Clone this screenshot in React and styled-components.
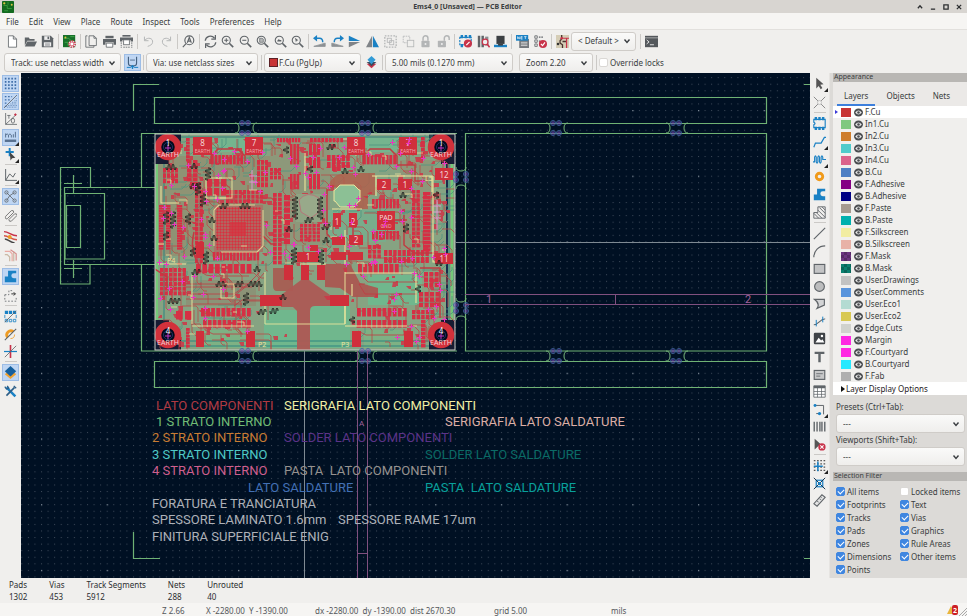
import React from 'react'
import styled, { createGlobalStyle, css } from 'styled-components'

const GlobalStyle = createGlobalStyle`
*{
box-sizing:border-box;
}
body{
margin:0;
font-family:"Noto Sans","Open Sans",sans-serif;
font-size:8px;
line-height:12px;
color:#3a3d40;
background-color:#f0efed;
}
button,input,select{
font:inherit;
color:inherit;
margin:0;
padding:0;
}
`

const K = '#5f6468'
const B = '#1a81c4'
const R = '#c8334a'
const G = '#b3b5b6'

const Window = styled.div`
height:100vh;
display:flex;
flex-direction:column;
overflow:hidden;
`

const TitleBar = styled.header`
height:13px;
flex:none;
display:flex;
align-items:center;
padding:0 2px;
background-color:#d8d5d1;
`

const Title = styled.h1`
flex:1;
margin:0;
padding-left:8px;
font-size:7px;
line-height:12px;
font-weight:700;
text-align:center;
`

const WindowButton = styled.button`
width:13px;
height:12px;
border:0;
background:none;
display:flex;
align-items:center;
justify-content:center;
`

const MenuBar = styled.nav`
height:17px;
flex:none;
display:flex;
align-items:center;
gap:10px;
padding:2px 6px 0;
background-color:#f6f5f3;
border-bottom:1px solid #e2e0dd;
`

const MenuLink = styled.a`
color:inherit;
text-decoration:none;
`

const Toolbar = styled.div`
height:${p => p.$height}px;
flex:none;
display:flex;
align-items:center;
padding-left:4px;
background-color:#f0efed;
`

const Column = styled.div`
width:${p => p.$width}px;
flex:none;
display:flex;
flex-direction:column;
align-items:center;
padding-top:2px;
background-color:#f0efed;
`

const Group = styled.div`
display:flex;
flex:none;
justify-content:space-between;
${p => p.$column
    ? css`flex-direction:column;height:${p.$size}px;`
    : css`width:${p.$size}px;`}
`

const Divider = styled.span`
flex:none;
background-color:#cbc9c6;
${p => p.$column
    ? css`width:12px;height:1px;margin:1px 0 2px;`
    : css`width:1px;height:15px;margin:0 2px;`}
`

const ToolButton = styled.button`
width:17px;
height:17px;
flex:none;
position:relative;
display:flex;
align-items:center;
justify-content:center;
border:1px solid ${p => (p.$active ? '#9dbde6' : 'transparent')};
background-color:${p => (p.$active ? '#bfd6f3' : 'transparent')};
&:hover{
  background-color:#d5e3f5;
}
${p => p.$more && css`
&::after{
  content:"";
  position:absolute;
  right:-1px;
  bottom:-1px;
  border:2px solid transparent;
  border-right-color:#222;
  border-bottom-color:#222;
}
`}
`

const SelectBox = styled.div`
position:relative;
flex:none;
height:19px;
width:${p => (p.$width ? p.$width + 'px' : 'auto')};
margin-right:${p => p.$after || 0}px;
display:flex;
align-items:center;
background:linear-gradient(#fafaf9,#efeeec);
border:1px solid #cfccc8;
border-radius:3px;
`

const SelectInput = styled.select`
appearance:none;
flex:1;
min-width:0;
height:100%;
border:0;
background:none;
padding-left:${p => (p.$tight ? 1 : 6)}px;
outline:none;
`

const Arrow = styled.svg`
position:absolute;
right:4px;
top:50%;
margin-top:-4px;
pointer-events:none;
`

const Swatch = styled.span`
width:10px;
height:9px;
flex:none;
background-color:${p => p.$color};
${p => p.$checker && css`
background-image:conic-gradient(rgba(0,0,0,0.2) 25%,transparent 0 50%,rgba(0,0,0,0.2) 0 75%,transparent 0);
background-size:6px 6px;
`}
`

const LayerSwatch = styled.span`
width:9px;
height:9px;
flex:none;
margin-left:4px;
background-color:#c83434;
border:1px solid #5c2226;
`

const CheckLabel = styled.label`
display:flex;
align-items:center;
gap:2px;
height:13px;
white-space:nowrap;
`

const CheckInput = styled.input`
appearance:none;
width:9px;
height:9px;
flex:none;
position:relative;
background-color:#fff;
border:1px solid #dad8d5;
border-radius:2px;
&:checked{
  background-color:#3f86e0;
  border-color:#3f86e0;
}
&:checked::after{
  content:"";
  position:absolute;
  left:2px;
  top:0;
  width:3px;
  height:5px;
  border:solid #fff;
  border-width:0 1px 1px 0;
  transform:rotate(45deg);
}
`

const Main = styled.main`
flex:1;
min-height:0;
display:flex;
`

const Canvas = styled.div`
flex:1;
min-width:0;
background-color:#001023;
`

const Drawing = styled.svg`
display:block;
width:100%;
height:100%;
`

const Panel = styled.aside`
width:138px;
flex:none;
padding-left:3px;
display:flex;
flex-direction:column;
background-color:#dcdad7;
border-left:1px solid #e6e4e1;
`

const PanelTitle = styled.h2`
flex:none;
height:9px;
margin:0;
padding-left:1px;
font-size:7px;
line-height:8px;
font-weight:400;
background-color:#b9b7b4;
`

const Tabs = styled.div`
flex:none;
height:24px;
display:flex;
align-items:flex-end;
padding:0 4px;
background-color:#ebe9e7;
`

const Tab = styled.button`
height:18px;
padding:0 ${p => p.$pad}px;
border:0;
border-bottom:2px solid ${p => (p.$active ? '#3d7fdc' : 'transparent')};
background:none;
`

const LayerList = styled.ul`
flex:none;
margin:0;
padding:0;
list-style:none;
background-color:#f0efed;
`

const LayerRow = styled.li`
height:12px;
display:flex;
align-items:center;
padding-left:2px;
background-color:${p => (p.$active ? '#fff' : 'transparent')};
`

const Marker = styled.span`
width:6px;
border-left:3px solid ${p => (p.$active ? '#3a39d8' : 'transparent')};
border-top:2px solid transparent;
border-bottom:2px solid transparent;
`

const EyeButton = styled.button`
width:14px;
height:12px;
border:0;
background:none;
display:flex;
align-items:center;
justify-content:center;
`

const Options = styled.button`
flex:none;
height:13px;
padding-left:8px;
border:0;
text-align:left;
background-color:#fff;
color:#1f2123;
display:flex;
align-items:center;
gap:1px;
`

const Caret = styled.span`
border-left:4px solid #111;
border-top:3px solid transparent;
border-bottom:3px solid transparent;
`

const Presets = styled.div`
flex:none;
display:flex;
flex-direction:column;
padding:5px 2px 6px 3px;
`

const FieldLabel = styled.label`
height:14px;
line-height:14px;
`

const Filters = styled.div`
display:grid;
grid-template-columns:64px 1fr;
padding:4px 0 0 3px;
`

const MessagePanel = styled.dl`
flex:none;
height:25px;
margin:0;
padding-left:9px;
display:flex;
gap:22px;
color:#2b2d2f;
background-color:#f0efed;
`

const Message = styled.div`
padding-top:1px;
dt,dd{
  margin:0;
  line-height:12px;
}
`

const StatusBar = styled.footer`
flex:none;
height:13px;
display:flex;
align-items:center;
padding-left:162px;
background-color:#f6f5f3;
color:#55585b;
`

const Status = styled.span`
width:${p => p.$width}px;
flex:none;
white-space:pre;
padding-top:3px;
`

const Alerts = styled.svg`
margin-left:auto;
flex:none;
`

const lens = (
  <g fill="none" stroke={K} strokeWidth="1.3">
    <circle cx="6.5" cy="6.5" r="5" />
    <path d="M10.2 10.2L15 15" strokeWidth="2" />
  </g>
)

const padlock = <rect x="3" y="7" width="10" height="8" rx="1" fill={G} />

const ICONS = {
  create: <path d="M3 1h6l4 4v10H3zM9 1v4h4" fill="#fff" stroke={K} />,
  open: <g fill={K}><path d="M1 3h5l1 2h6v2H4l-3 6z" /><path d="M4 8h12l-3 6H1z" /></g>,
  save: (
    <g>
      <path d="M1 1h11l3 3v11H1z" fill={K} />
      <rect x="4" y="1.500" width="7" height="4.500" fill="#eee" />
      <rect x="8" y="2" width="2" height="3" fill={K} />
      <rect x="3.500" y="9" width="9" height="5" fill="#eee" />
      <path d="M5 11h6M5 12.500h6" stroke={K} strokeWidth=".7" />
    </g>
  ),
  board: (
    <g>
      <rect width="15" height="15" fill="#17702a" />
      <path d="M1 4h6l3 3M2 9h4v4M9 2h5" stroke="#49b150" fill="none" />
      <circle cx="3" cy="3" r="1.200" fill="#e0c63a" />
      <circle cx="11" cy="11" r="4" fill="#fff" stroke={R} strokeWidth="1.800" strokeDasharray="1.600 1.500" />
      <circle cx="11" cy="11" r="2.500" fill="none" stroke={R} />
    </g>
  ),
  page: <path d="M5 1h6l3 3v9H5zM11 1v3h3M3 1H1v14h10v-2" fill="none" stroke={K} />,
  print: (
    <g fill={K}>
      <rect x="3" y="1" width="10" height="3" />
      <path d="M0 5h16v7h-3V9H3v3H0z" />
      <path d="M4 10h8v5H4z" fill="#fff" stroke={K} />
    </g>
  ),
  plot: (
    <g fill={K}>
      <rect x="3" y="0" width="10" height="2" />
      <path d="M0 3h16v5h-3V6H3v2H0z" />
      <rect x="4.500" y="6" width="7" height="6" fill="#fff" stroke={K} />
      <path d="M1.500 9v7M14.500 9v7M4 15h8" stroke={K} strokeDasharray="2 1" />
    </g>
  ),
  undo: <path d="M3 2v5h5M3.500 6.500C7 2 14 4 13 9c-.5 3-3 4-6 5" fill="none" stroke={G} strokeWidth="1.200" />,
  redo: <path d="M13 2v5H8M12.500 6.500C9 2 2 4 3 9c.5 3 3 4 6 5" fill="none" stroke={G} strokeWidth="1.200" />,
  find: (
    <g fill="none" stroke={K} strokeWidth="1.400">
      <circle cx="9" cy="6.500" r="5.500" />
      <path d="M5 10.500L1 15M6.500 9.500L9 3l2.500 6.500M7.500 7.500h3" />
    </g>
  ),
  refresh: (
    <g fill="none" stroke={K} strokeWidth="1.500">
      <path d="M1.500 7C2 2 9-1 13 4M14.500 9C14 14 7 17 3 12" />
      <path d="M14 0v5H9M2 16v-5h5" />
    </g>
  ),
  zoomIn: <g>{lens}<path d="M4 6.500h5M6.500 4v5" stroke={K} strokeWidth="1.300" /></g>,
  zoomOut: <g>{lens}<path d="M4 6.500h5" stroke={K} strokeWidth="1.300" /></g>,
  zoomPage: <g>{lens}<path d="M4.500 4h3l1.500 1v4h-4.500z" fill={G} stroke={K} strokeWidth=".8" /></g>,
  zoomObjects: <g>{lens}<path d="M4 7l2-2 1 1h2v2H4z" fill={K} /></g>,
  zoomSelect: <g>{lens}<path d="M5 3.500l4 3-2 .5-1 2z" fill={K} /></g>,
  rotateLeft: (
    <g>
      <path d="M1 14h14v-4z" fill="#8d9194" stroke="#8d9194" />
      <path d="M4 4h4c3 0 4 2 4 5" fill="none" stroke={B} strokeWidth="1.800" />
      <path d="M0 4l5-4v8z" fill={B} />
    </g>
  ),
  rotateRight: (
    <g>
      <path d="M15 14H1v-4z" fill="#8d9194" stroke="#8d9194" />
      <path d="M12 4H8C5 4 4 6 4 9" fill="none" stroke={B} strokeWidth="1.800" />
      <path d="M16 4l-5-4v8z" fill={B} />
    </g>
  ),
  flipVertical: <g><path d="M1 1l14 6.500H1z" fill={B} /><path d="M1 15l14-6.500H1z" fill="#808488" /></g>,
  flipHorizontal: <g><path d="M7.500 1v14H0z" fill="#808488" /><path d="M8.500 1v14H16z" fill={B} /></g>,
  group: (
    <g fill="none" stroke={G}>
      <rect x="1" y="1" width="14" height="14" strokeDasharray="2 1.500" strokeWidth="1.600" />
      <rect x="4" y="4" width="5" height="5" /><rect x="7" y="7" width="5" height="5" />
    </g>
  ),
  ungroup: (
    <g fill="none" stroke={G}>
      <rect x="1.500" y="1.500" width="8" height="8" strokeDasharray="2 1" />
      <rect x="6.500" y="6.500" width="8" height="8" fill="#f0efed" />
    </g>
  ),
  lock: <g>{padlock}<path d="M5 7V4a3 3 0 016 0v3" fill="none" stroke={G} strokeWidth="1.800" /><circle cx="8" cy="11" r="1.200" fill="#eee" /></g>,
  unlock: <g><rect x="1" y="7" width="10" height="8" rx="1" fill={G} /><path d="M9 7V4a3 3 0 016 0v2" fill="none" stroke={G} strokeWidth="1.800" /><circle cx="6" cy="11" r="1.200" fill="#eee" /></g>,
  footprintEditor: (
    <g>
      <path d="M2 0h3v4H2zM7 0h3v4H7zM12 0h3v4h-3zM2 11h3v4H2z" fill={B} />
      <rect x="1" y="3" width="14" height="9" fill="none" stroke={B} strokeWidth="1.400" strokeDasharray="3 1" />
      <circle cx="11" cy="10.500" r="5" fill={R} />
      <path d="M9 12.500l4-4" stroke="#fff" strokeWidth="1.500" />
    </g>
  ),
  library: (
    <g>
      <path d="M1 1h3v14H1zM5.500 1h3v14h-3z" fill={K} /><path d="M10 2h4v11h-4z" fill="#8a8d90" />
      <circle cx="10" cy="8.500" r="3.500" fill="#eee" stroke={R} strokeWidth="1.500" />
      <path d="M12.500 11l3 4" stroke={R} strokeWidth="2" />
    </g>
  ),
  update: (
    <g>
      <path d="M3 1h10v10H3z" fill="#3b3f43" /><path d="M0 12h16v3H0z" fill={B} />
      <path d="M5 11h6v2H5z" fill="#3b3f43" />
    </g>
  ),
  netlist: (
    <g>
      <path d="M4 5h12v11H4z" fill="#74787c" /><path d="M0 0h15v7H0z" fill={B} />
      <path d="M2 5V2l2 3V2M6 2v3h2M6 2h2M6 3.500h2M10 2h3M11.500 2v3" stroke="#fff" fill="none" strokeWidth=".8" />
      <path d="M6 9h8M6 11h8M6 13h8" stroke="#ddd" />
    </g>
  ),
  drc: (
    <g>
      <path d="M1 1h3v3H1zM1 6h3v3H1zM1 11h3v3H1z" fill="none" stroke={K} />
      <path d="M6 2.500h6M6 7.500h3" stroke={K} strokeWidth="1.500" strokeDasharray="2 1" />
      <circle cx="11" cy="11" r="5" fill={R} /><path d="M8.500 11l2 2 3-4" stroke="#fff" fill="none" strokeWidth="1.400" />
    </g>
  ),
  route: (
    <g>
      <rect width="16" height="16" fill="#d5cdb6" />
      <path d="M7 0v5M7 5l-2 2v3l3 2v4M8 8h5" stroke="#4a3530" fill="none" strokeWidth="1.600" />
      <path d="M7 4h9M13 4v12" stroke={R} strokeWidth="1.500" fill="none" />
      <circle cx="7" cy="4" r="1.600" fill={R} /><circle cx="2.500" cy="11" r="1.600" fill="#333" />
    </g>
  ),
  terminal: (
    <g>
      <rect x="0" y="1" width="16" height="14" fill="#54585c" />
      <path d="M0 3.500h16" stroke="#bbb" /><path d="M2 6l3 2.500L2 11M6 12h5" stroke="#fff" fill="none" />
    </g>
  ),
  trackWidth: (
    <g fill="none">
      <path d="M3 1v8q0 3 3 3h4q3 0 3-3V1" stroke="#44607f" strokeWidth="1.400" />
      <path d="M5 5h6" stroke="#44607f" />
      <path d="M1 14h5M10 14h5" stroke={B} strokeWidth="1.200" />
      <path d="M8 11v5M6 13h4" stroke={B} strokeWidth="1.600" />
    </g>
  ),
  layerPair: (
    <g>
      <path d="M8 15L2 9.500h12z" fill={R} /><path d="M8 12.500L2 7.500h12z" fill="#3b4a5a" />
      <path d="M8 0l5 4.500L8 10 3 4.500z" fill="#329bd6" />
    </g>
  ),
  grid: (
    <path d="M1 2h15M1 6h15M1 10h15M1 14h15" stroke="#3f6ea8" strokeWidth="2" strokeDasharray="2 2" fill="none" />
  ),
  gridOverride: (
    <g fill="none">
      <path d="M1 2h9M1 6h7M1 10h4M1 14h2" stroke="#3f6ea8" strokeWidth="1.800" strokeDasharray="2 2" />
      <path d="M15 4v1M13 7h3M10 9h6M8 11h8M5 13h11M4 15h12" stroke="#4f79ab" strokeDasharray="1 1" />
      <path d="M0 16L16 0" stroke={K} />
    </g>
  ),
  polar: (
    <g fill="none" stroke={K}>
      <path d="M2 0v14h14M2 14L15 2M4 3h4M6 3v4" /><ellipse cx="11" cy="9.500" rx="2" ry="3" />
      <circle cx="14" cy="2" r="1" stroke={R} fill={R} />
    </g>
  ),
  mil: (
    <g fill="none" stroke="#57708f">
      <path d="M2 8V3M2 5q2-3 3.500 0v3M5.500 5q2-3 3.500 0v3M11.500 4v4M14 1v7" strokeWidth="1.200" />
      <path d="M1 12h14" strokeWidth="3" />
    </g>
  ),
  cursor: (
    <g>
      <path d="M7 0v10M2 5h10" stroke={B} strokeWidth="2.400" />
      <path d="M7 5l7 7-4 .5-2 3z" fill="#444" />
    </g>
  ),
  angle: <path d="M2 0v14h14M2 14L7 6l4 4 3-5" fill="none" stroke={K} strokeWidth="1.200" />,
  ratsnest: (
    <g fill="none" stroke={K}>
      <path d="M3 3l10 10M3 13L7 7l6-4" />
      <circle cx="3" cy="3" r="2" /><circle cx="13" cy="3" r="2" /><circle cx="3" cy="13" r="2" /><circle cx="13" cy="13" r="2" />
    </g>
  ),
  curved: (
    <g fill="none" stroke="#777">
      <path d="M2 9l7-7q3-1 3 2l-8 8q-3 1-2-3zM6 13l7-7q3-1 3 2l-7 7q-3 1-3-2z" strokeWidth="1.200" />
    </g>
  ),
  highContrast: (
    <g fill="none" strokeWidth="1.800">
      <path d="M0 2c6 0 9 5 16 5" stroke={R} /><path d="M0 7c6 0 9 5 16 5" stroke="#d4574a" />
      <path d="M1 11c4 0 6 4 12 5" stroke="#444" /><circle cx="7" cy="8.500" r="2.500" fill="#ee9b23" stroke="none" />
    </g>
  ),
  fade: (
    <g fill="none" strokeWidth="1.500">
      <path d="M1 3h6l3 3v9" stroke="#e9aaa4" /><path d="M1 7h3l3 3v5M12 3v12" stroke="#c9b9a5" /><path d="M8 1l7 5v8" stroke="#d7908e" />
    </g>
  ),
  zone: <path d="M5 1h10v3h-3q-3 0-3 3t3 3h3v5H1V8h4z" fill={B} />,
  zoneOutline: (
    <g fill="none" stroke={K}>
      <path d="M1 7v8h14V9M1 7h5V2h4" strokeDasharray="2 2" /><path d="M9 6h5M12 4l2 2-2 2" stroke="#333" strokeWidth="1.200" />
    </g>
  ),
  footprint: (
    <g>
      <path d="M2 0h3v4H2zM6.500 0h3v4h-3zM11 0h3v4h-3zM2 12h3v4H2zM6.500 12h3v4h-3zM11 12h3v4h-3z" fill={B} />
      <path d="M1 3h14v10H1V9.500q3-1.500 0-3z" fill="none" stroke={B} strokeWidth="1.400" />
    </g>
  ),
  padSketch: (
    <g>
      <path d="M1 1h4v4H1zM6 1h4v4H6zM11 1h4v4h-4z" fill={B} />
      <path d="M1.500 11.500h3v3h-3zM6.500 11.500h3v3h-3zM11.500 11.500h3v3h-3zM1 6v4M15 6v4" fill="none" stroke={B} />
      <path d="M1 15L15 1" stroke={K} />
    </g>
  ),
  viaSketch: (
    <g fill="none">
      <path d="M4.500 11.500A5 5 0 0111.500 4.500" stroke="#ee9b23" strokeWidth="3.500" />
      <path d="M13 8a5 5 0 01-5 5" stroke="#ee9b23" />
      <path d="M1 15L15 1" stroke={K} strokeWidth="1.300" />
    </g>
  ),
  trackSketch: <g><path d="M8 0v16" stroke={R} strokeWidth="2" /><path d="M0 8h16" stroke={B} strokeWidth="1.500" /><path d="M1 15L15 1" stroke={K} /></g>,
  layers: <g><path d="M8 4l7 6-7 6-7-6z" fill="#f0a334" /><path d="M8 0l7 6.500L8 13 1 6.500z" fill="#155f9d" /></g>,
  properties: (
    <g fill="none">
      <path d="M3 3l11 11" stroke={B} strokeWidth="3" />
      <path d="M13 3L3 13" stroke="#2c5d86" strokeWidth="2" />
      <path d="M1 2l2 3 3-1-2-3M12 1l3 3" stroke="#2c5d86" strokeWidth="1.500" />
    </g>
  ),
  select: <path d="M4 1l9 8-4 .5 2.500 4-2 1.500L7 11l-3 3z" fill="#555" />,
  localRatsnest: (
    <g fill="none" stroke="#888"><path d="M1 1l5 5M15 1l-5 5M1 15l5-5M15 15l-5-5" strokeWidth="1.200" /><circle cx="8" cy="8" r="2.500" stroke="#bbb" /></g>
  ),
  routeTrack: <path d="M1 15l2-5h7l4-7h2" fill="none" stroke={B} strokeWidth="1.500" />,
  tune: <path d="M0 11h2V5q1-3 2 0v6q1 3 2 0V5q1-3 2 0v6q1 3 2 0V5q1-3 2 0v3h4" fill="none" stroke={B} strokeWidth="1.400" />,
  via: <circle cx="8" cy="8" r="4" fill="none" stroke="#f09a1a" strokeWidth="3.500" />,
  ruleArea: (
    <g fill="none" stroke={K} strokeWidth="1.100">
      <path d="M6 1h9v14H1V8h5zM6 5l9 9M8 2l7 7M11 1l4 4M4 8l7 7M1 9l6 6" />
    </g>
  ),
  line: <path d="M1 15L15 1" stroke={K} strokeWidth="1.400" />,
  arc: <path d="M1 15C1 7 7 1 15 1" fill="none" stroke={K} strokeWidth="1.400" />,
  rect: <rect x="1.500" y="3" width="13" height="11" fill="#c3c4c5" stroke={K} strokeWidth="1.400" />,
  circle: <circle cx="8" cy="8" r="6" fill="#bcbdbe" stroke={K} strokeWidth="1.400" />,
  polygon: <path d="M2 3h12v7l-9 4q4-6-3-11z" fill="#d3d4d5" stroke={K} strokeWidth="1.400" />,
  bezier: <g fill="none"><path d="M1 12C7 12 9 4 15 5" stroke={K} strokeWidth="1.300" /><path d="M4 6v8M12 2v7" stroke={B} strokeWidth="1.200" /></g>,
  image: <g><rect x="1" y="1" width="14" height="14" rx="1.500" fill="#3f4347" /><path d="M3 13l4-6 3 3.500 1.500-1.500L14 13z" fill="#fff" /><circle cx="11" cy="5" r="1.500" fill="#fff" /></g>,
  text: <path d="M2 2h12v3H9.500v10h-3V5H2z" fill={K} />,
  textbox: <g><rect x="1.500" y="3" width="13" height="11" fill="#c7c8c9" stroke={K} strokeWidth="1.400" /><path d="M4 7h8M4 10h5" stroke={K} /></g>,
  table: <g><path d="M1 1h14v14H1z" fill="#fff" stroke={K} /><path d="M1 1h14v3H1z" fill={K} /><path d="M1 8h14M1 11.500h14M5.500 3v12M10.500 3v12" stroke={K} strokeWidth=".9" /></g>,
  dimension: <g fill="none"><path d="M2 3h11v11M4 13h5" stroke={K} strokeWidth="1.200" /><circle cx="2.500" cy="3" r="1.800" fill={B} /><circle cx="8" cy="13" r="2" fill={B} /></g>,
  barcode: <path d="M1.500 2v12M5 2v12M8.500 2v12M11 2v12M14.500 2v12" stroke={K} strokeWidth="1.700" />,
  erase: <g><path d="M2 1l9 8-4 .5L2 14z" fill="#555" /><circle cx="11" cy="11" r="4.500" fill={R} /><path d="M9 9l4 4M13 9l-4 4" stroke="#fff" strokeWidth="1.300" /></g>,
  gridOrigin: (
    <g>
      <path d="M1 2h15M1 6h15M1 10h15M1 14h15" stroke="#555" strokeWidth="1.600" strokeDasharray="2 2" />
      <path d="M6 3v12M1 9h11" stroke={B} strokeWidth="1.800" />
    </g>
  ),
  origin: <g fill="none"><rect x="4" y="4" width="8" height="8" stroke={B} strokeWidth="1.500" /><path d="M1 1l14 14M15 1L1 15" stroke="#17334d" strokeWidth="1.200" /><circle cx="8" cy="8" r="2" fill={B} /></g>,
  measure: <g><path d="M1 12L11 1l4 3L5 15z" fill="#e4e4e4" stroke={K} strokeWidth="1.300" /><path d="M5 9l2 1M8 6l2 1M10 4l1 1" stroke={K} /></g>,
}

function Tool({ icon, label, active, more }) {
  return (
    <ToolButton type="button" aria-label={label || icon} aria-pressed={active} $active={active} $more={more}>
      <svg width="13" height="13" viewBox="0 0 16 16" aria-hidden="true">{ICONS[icon]}</svg>
    </ToolButton>
  )
}

function Select({ label, value, width, after, id, children }) {
  return (
    <SelectBox $width={width} $after={after}>
      {children}
      <SelectInput id={id} aria-label={label} defaultValue={value} $tight={Boolean(children)}>
        <option>{value}</option>
      </SelectInput>
      <Arrow width="8" height="8" viewBox="0 0 8 8">
        <path d="M1.500 2.500L4 5.500l2.500-3" fill="none" stroke="#3a3d40" strokeWidth="1.400" />
      </Arrow>
    </SelectBox>
  )
}

function Check({ label, checked }) {
  return (
    <CheckLabel>
      <CheckInput type="checkbox" defaultChecked={checked} />
      {label}
    </CheckLabel>
  )
}

const TOP_GROUPS = [
  [52, ['create', 'open', 'save']],
  [17, ['board']],
  [52, ['page', 'print', 'plot']],
  [35, ['undo', 'redo']],
  [17, ['find']],
  [104, ['refresh', 'zoomIn', 'zoomOut', 'zoomPage', 'zoomObjects', 'zoomSelect']],
  [141, ['rotateLeft', 'rotateRight', 'flipVertical', 'flipHorizontal', 'group', 'ungroup', 'lock', 'unlock']],
  [52, ['footprintEditor', 'library', 'update']],
  [35, ['netlist', 'drc']],
]

const LEFT_GROUPS = [
  [71, ['grid', 'gridOverride', 'polar', 'mil']],
  [17, ['cursor']],
  [17, ['angle']],
  [36, ['ratsnest', 'curved']],
  [36, ['highContrast', 'fade']],
  [36, ['zone', 'zoneOutline']],
  [52, ['padSketch', 'viaSketch', 'trackSketch']],
  [36, ['layers', 'properties']],
]

const RIGHT_GROUPS = [
  [36, ['select', 'localRatsnest']],
  [106, ['footprint', 'routeTrack', 'tune', 'via', 'zone', 'ruleArea']],
  [228, ['line', 'arc', 'rect', 'circle', 'polygon', 'bezier', 'image', 'text', 'textbox', 'table', 'dimension', 'barcode', 'erase']],
  [52, ['gridOrigin', 'origin', 'measure']],
]

const ACTIVE = ['grid', 'gridOverride', 'mil', 'ratsnest', 'zone', 'layers']
const LEFT_MORE = ['mil', 'cursor', 'angle']
const RIGHT_MORE = ['select', 'routeTrack', 'tune', 'dimension', 'gridOrigin']

const LAYERS = [
  ['F.Cu', '#c83434'], ['In1.Cu', '#7fc87f'], ['In2.Cu', '#ce7d2c'], ['In3.Cu', '#4fcbcb'],
  ['In4.Cu', '#db628b'], ['B.Cu', '#4d7fc4'], ['F.Adhesive', '#840084'], ['B.Adhesive', '#000084'],
  ['F.Paste', '#a59a90'], ['B.Paste', '#00b0ae'], ['F.Silkscreen', '#f2eda1'], ['B.Silkscreen', '#e8b2a7'],
  ['F.Mask', '#6b3480'], ['B.Mask', '#0b8070'], ['User.Drawings', '#c2c2c2'], ['User.Comments', '#5994dc'],
  ['User.Eco1', '#b4dbd2'], ['User.Eco2', '#d8c852'], ['Edge.Cuts', '#d0d2cd'], ['Margin', '#ff26e2'],
  ['F.Courtyard', '#ff26e2'], ['B.Courtyard', '#26e9ff'], ['F.Fab', '#afafaf'],
]

const FILTERS = [
  ['All items', true], ['Locked items', false], ['Footprints', true], ['Text', true], ['Tracks', true],
  ['Vias', true], ['Pads', true], ['Graphics', true], ['Zones', true], ['Rule Areas', true],
  ['Dimensions', true], ['Other items', true], ['Points', true],
]

const MESSAGES = [['Pads', '1302'], ['Vias', '453'], ['Track Segments', '5912'], ['Nets', '288'], ['Unrouted', '40']]

const NOTES = [
  [156, 410, '#b03a42', 'LATO COMPONENTI'],
  [284, 410, '#f0efa4', 'SERIGRAFIA LATO COMPONENTI'],
  [156, 426, '#72bd76', '1 STRATO INTERNO'],
  [445, 426, '#dcaea6', 'SERIGRAFIA LATO SALDATURE'],
  [152, 442, '#c87c33', '2 STRATO INTERNO'],
  [284, 442, '#5b3388', 'SOLDER LATO COMPONENTI'],
  [152, 459, '#4fc9c6', '3 STRATO INTERNO'],
  [425, 459, '#0b6b66', 'SOLDER LATO SALDATURE'],
  [152, 475, '#cf5f8e', '4 STRATO INTERNO'],
  [284, 475, '#96928f', 'PASTA  LATO COMPONENTI'],
  [248, 492, '#4270b5', 'LATO SALDATURE'],
  [425, 492, '#08a09c', 'PASTA  LATO SALDATURE'],
  [152, 508, '#adb1b8', 'FORATURA E TRANCIATURA'],
  [152, 524, '#adb1b8', 'SPESSORE LAMINATO 1.6mm'],
  [338, 524, '#adb1b8', 'SPESSORE RAME 17um'],
  [152, 541, '#adb1b8', 'FINITURA SUPERFICIALE ENIG'],
]

// x, y, width, height, columns, rows
const PAD_ARRAYS = [
  [160, 268, 27, 28, 6, 6], [213, 252, 47, 10, 14, 1], [196, 264, 57, 11, 9, 1], [201, 308, 51, 10, 10, 1],
  [203, 320, 49, 9, 10, 1], [211, 155, 33, 11, 9, 1], [207, 179, 21, 18, 3, 2], [159, 205, 6, 45, 1, 18],
  [166, 205, 6, 45, 1, 18], [177, 205, 7, 45, 1, 18], [195, 190, 9, 74, 2, 16], [273, 193, 10, 72, 2, 16],
  [284, 195, 8, 50, 1, 8], [163, 168, 16, 16, 4, 3], [187, 160, 12, 22, 2, 5], [226, 190, 38, 14, 9, 3],
  [363, 155, 34, 11, 9, 1], [372, 199, 28, 11, 8, 1], [372, 231, 28, 10, 8, 1], [412, 190, 9, 58, 2, 14],
  [423, 192, 10, 60, 1, 16], [358, 264, 42, 11, 8, 1], [357, 308, 51, 10, 10, 1], [357, 320, 51, 9, 10, 1],
  [412, 310, 23, 10, 5, 2], [424, 272, 16, 16, 3, 3], [384, 250, 46, 14, 10, 2], [327, 155, 24, 14, 5, 2],
  [419, 292, 22, 16, 4, 3], [176, 311, 18, 10, 2, 1], [277, 138, 24, 5, 8, 1], [290, 144, 10, 24, 3, 1],
  [310, 138, 34, 5, 9, 1], [309, 144, 12, 26, 3, 2], [290, 174, 10, 18, 3, 1], [309, 174, 12, 18, 3, 1],
  [332, 158, 10, 14, 2, 2], [257, 160, 12, 28, 3, 5], [300, 224, 21, 18, 5, 5], [368, 245, 14, 14, 3, 3],
  [186, 138, 5, 24, 1, 7], [421, 137, 5, 22, 1, 6], [421, 320, 6, 28, 1, 7], [186, 328, 5, 20, 1, 6],
  [270, 168, 12, 12, 3, 3], [190, 182, 12, 8, 4, 2],
]

// x, y, width, height, designator, name
const BIG_PADS = [
  [193, 137, 19, 18, '8', 'EARTH'], [245, 137, 18, 18, '7', 'EARTH'], [347, 137, 18, 18, '8', 'EARTH'],
  [399, 137, 18, 18, '7', 'EARTH'], [377, 179, 14, 11, '2'], [398, 179, 14, 11, '1'],
  [377, 211, 18, 19, 'PAD', 'GND'], [435, 168, 18, 12, '12'], [435, 253, 18, 11, '11'], [349, 235, 14, 10, '2'],
  [297, 252, 22, 10, '1'], [333, 213, 8, 14, '1'], [349, 213, 8, 14, '2'], [331, 252, 15, 8], [348, 252, 15, 8],
  [332, 237, 13, 8], [260, 295, 22, 11], [330, 295, 19, 11], [196, 331, 8, 16], [246, 331, 9, 16],
  [352, 331, 9, 16], [404, 331, 9, 16], [284, 265, 9, 15], [301, 265, 8, 15], [317, 265, 8, 15],
  [196, 242, 8, 16], [310, 245, 8, 6],
]

const HOLES = [[168, 147, '1'], [441, 147, '1'], [168, 335, '4'], [441, 335, '4']]
const BITES = [[245, 128], [365, 128], [556, 128], [676, 128], [245, 356], [365, 356], [556, 356], [676, 356]]

function sequence(seed) {
  let n = seed
  return () => {
    n = (n * 16807) % 2147483647
    return n / 2147483647
  }
}

function scatter(seed, count, draw) {
  const next = sequence(seed)
  const parts = []
  for (let i = 0; i < count; i++) {
    const x = 159 + Math.round(next() * 288)
    const y = 138 + Math.round(next() * 206)
    const inPlane = x > 256 && x < 385 && y > 264
    const inGrid = x > 210 && x < 264 && y > 203 && y < 253
    if ((inPlane || inGrid) && next() < 0.88) continue
    parts.push(draw(x, y, next))
  }
  return parts.join('')
}

const TRACKS = scatter(411, 340, (x, y, next) => {
  const a = Math.round(3 + next() * 12)
  const b = Math.round(1 + next() * 4)
  return next() > 0.5 ? `M${x} ${y}h${a}l${b} ${b}v${a}` : `M${x} ${y}v${a}l${b} ${b}h${b}`
})
const INNER = scatter(97, 150, (x, y, next) => `M${x} ${y}h${Math.round(next() * 20)}l4 -4v-${Math.round(next() * 12)}`)
const CHIPS = scatter(2024, 330, (x, y, next) => `M${x} ${y}h${Math.round(2 + next() * 4)}v${Math.round(2 + next() * 3)}h-${Math.round(2 + next() * 3)}z`)
const ANCHORS = scatter(73, 170, (x, y) => `M${x - 2} ${y + 0.5}h5M${x + 0.5} ${y - 2}v5`)
const SILK = scatter(31, 50, (x, y, next) => `M${x} ${y}h${Math.round(2 + next() * 7)}${next() > 0.5 ? 'v4' : ''}`)

// reference designators set in the dark layer: x, y, length, upright
const LABELS = [
  [166, 167, 9], [191, 166, 5], [208, 168, 12, 1], [190, 186, 10], [198, 183, 12, 1], [203, 194, 12, 1],
  [166, 212, 12, 1], [173, 212, 16, 1], [188, 214, 10, 1], [209, 220, 5], [211, 238, 6], [166, 232, 8, 1],
  [220, 206, 8], [240, 206, 10], [193, 248, 8, 1], [206, 252, 12, 1], [254, 269, 6], [192, 272, 8],
  [216, 284, 9], [235, 284, 7], [248, 284, 14], [246, 293, 12, 1], [258, 312, 8], [270, 311, 8], [168, 301, 12],
  [295, 197, 22, 1], [320, 197, 22, 1], [286, 147, 5, 1], [310, 166, 5, 1], [327, 147, 8], [358, 169, 5],
  [342, 171, 6], [305, 220, 8], [294, 248, 16, 1], [321, 250, 14, 1], [322, 227, 8], [286, 229, 6],
  [400, 195, 5], [436, 192, 6, 1], [418, 286, 6, 1], [352, 317, 6, 1], [406, 224, 8, 1], [280, 297, 6],
  [436, 263, 5], [323, 240, 6],
].map(([x, y, len, upright]) => {
  let d = `M${x} ${y}`
  for (let i = 0; i < len; i += 2) {
    const side = (i / 2) % 2 ? -3 : 3
    d += upright ? `q${side} 0 ${side} 1t${-side} 1` : `q0 ${side} 1 ${side}t1 ${-side}`
  }
  return d
}).join('')

function padArray([x, y, w, h, cols, rows], key) {
  const pads = []
  for (let c = 0; c < cols; c++) {
    for (let r = 0; r < rows; r++) {
      const cw = w / cols
      const rh = h / rows
      pads.push(<rect key={`${c}-${r}`} x={x + c * cw} y={y + r * rh} width={cw * 0.75} height={rh * 0.85} />)
    }
  }
  return <g key={key}>{pads}</g>
}

function Board() {
  return (
    <g>
      <g clipPath="url(#outline)">
        <rect x="155" y="134" width="300" height="216" fill="#86a382" />
        <g opacity=".6">
          <path d="M157 156h140v50l-40 50h-100z" fill="#96896c" />
          <path d="M270 136h60v110h-60zM400 160h34v90h-34z" fill="#929175" />
          <path d="M186 280h70v26h-70z" fill="#8f8a70" />
          <path d="M310 306h40v42h-40zM264 310h33v38h-33zM368 275h54v30h-54z" fill="#62c595" />
          <path d="M204 330h42v18h-42zM364 330h40v18h-40z" fill="#79bb86" />
          <path d="M213 138h32v14h-32zM366 138h33v14h-33z" fill="#6bc197" />
          <path d="M328 210h44v-8h14v40h-58z" fill="#72b391" />
        </g>
        <path d="M158 137h290M158 341h290M158 346h290M164 150v180M449 145v185" stroke="#2c8580" fill="none" />
        <path d="M452 136v212M157 158v168" stroke="#74c878" strokeWidth="2" />
        <path d="M447 160v165" stroke="#1a2b4c" strokeWidth="2" />
        <path d="M155 134h26v14h-12v16h-14zM455 134h-26v14h12v16h14zM155 350h26v-14h-12v-16h-14zM455 350h-26v-14h12v-16h14z" fill="#171c33" />
        <path d={INNER} fill="none" stroke="#4f9480" strokeWidth=".8" />
        <path d={TRACKS} fill="none" stroke="#b84a48" strokeWidth=".8" />
        <path d="M329 186q2 -12 18 -13h28v22h-7v14h-18v-10l-8 -10z" fill="#b0604c" opacity=".85" />
        <path d="M273 268h12v12h8v11h-16q-4 0 -4 -5z" fill="#a85a50" opacity=".9" />
        <path d="M325 264h25l10 19l18 5v9h-25l-13 -9l-15 -1z" fill="#ab5650" opacity=".92" />
        <path d="M301 280h8l21 15v11h-15q-5 0 -5 5v39h-13v-39l-4 -4h-12v-12z" fill="#ac5a54" opacity=".95" />
        <path d={CHIPS} fill="#cf3547" opacity=".85" />
        <rect x="214" y="205" width="49" height="47" fill="#a57568" />
        <rect x="216" y="207" width="45" height="43" fill="url(#balls)" />
        <path d="M230 222h16v14h-16z" fill="#d8303f" opacity=".7" />
        <g fill="#d62f44">{PAD_ARRAYS.map(padArray)}</g>
        <g fill="none" stroke="#c03b42" strokeWidth="1.500">
          <path d="M211 164v-8l7 -7h20l7 7v8M363 164v-8l7 -7h20l7 7v8" />
          <path d="M155 269l12 8v10M263 236l8 8h4M194 232q-5 20 6 34" />
          <path d="M397 165l18 0v16l10 0M404 215v30l10 8h20M395 220h12M420 268h20v50M335 190h-8v44l8 8M353 228v10" />
          <path d="M201 262q-4 14 12 14h36M186 284h62l12 -12M186 287h66l12 -14M186 294h48l14 -10M186 299h44l18 -14M192 304h50" strokeWidth=".8" />
          <path d="M262 300h-20l-8 6M365 284h-6l6 10h52M360 262v12l8 8h50M205 306v24l8 4h30M358 331l8 4h38v-6" strokeWidth=".8" />
        </g>
        <g fill="none" stroke="#ece59c" strokeWidth="1.100">
          <path d="M219 205h36M263 210v36M257 252h-36M214 246v-36M214 210l5 -5M263 246l-6 6" opacity=".8" />
          <path d="M221 284h13v14h-13zM265 272v52M345 272v52M265 324h80M192 275v49M192 326h62M206 178h26v20h-26z" opacity=".85" />
          <path d="M305 153v38M345 273h71v30M345 296v28M372 176h60v16M345 326h62M376 176v20M332 209h30M345 230v34" />
          <path d="M161 186v17h18M158 264h28M158 244h6M433 176v86h20M352 284v12M300 264h26" />
        </g>
        <path d={SILK} fill="none" stroke="#eadf9c" strokeWidth=".8" />
        <path d="M335 190l5 -5h14l5 5h1v11h-1l-5 6h-14l-5 -6h-1v-11z" fill="#8cc095" stroke="#ece59c" />
        <path d="M296 194h26v28h-26z" fill="#8fa383" />
        <path d="M299 200q8 -10 20 -2v14l-8 6l-10 -6z" fill="#98a98a" stroke="#b5767a" />
        {BIG_PADS.map(([x, y, w, h, number, name], i) => (
          <g key={i}>
            <rect x={x} y={y} width={w} height={h} fill="#d02f3b" />
            <text x={x + w / 2} y={y + (name ? 9 : h - 2)} fontSize={name === 'GND' ? 7 : 8} textAnchor="middle" fill="#f3d6d5">{number}</text>
            {name && <text x={x + w / 2} y={y + h - 2} fontSize="5" textAnchor="middle" fill="#eda6aa">{name}</text>}
          </g>
        ))}
        <path d={LABELS} fill="none" stroke="#1f2420" />
        <path d={ANCHORS} fill="none" stroke="#ea35c0" />
        <path d="M437 200v30M433 206h8M433 212h8M433 218h8M252 170v20M249 176h8M249 182h8" stroke="#d99ad0" fill="none" />
        <g fill="#ece59c" fontSize="7">
          <text x="258" y="347">P2</text>
          <text x="341" y="347">P3</text>
          <text x="167" y="263">P4</text>
          <text x="425" y="181">L5</text>
        </g>
      </g>
      {HOLES.map(([x, y, number]) => (
        <g key={`${x}${y}`}>
          <circle cx={x} cy={y} r="10" fill="#020a1c" stroke="#d2313b" strokeWidth="6.500" />
          <circle cx={x} cy={y} r="4.500" fill="none" stroke="#1d3260" />
          <path d={`M${x - 3} ${y + 1}h6M${x} ${y - 2}v6`} stroke="#c038c4" />
          <text x={x} y={y - 1} fontSize="8" textAnchor="middle" fill="#fff">{number}</text>
          <text x={x} y={y + 10} fontSize="7" textAnchor="middle" fill="#f3cfd2">EARTH</text>
        </g>
      ))}
      <rect x="155" y="134" width="300" height="216" fill="none" stroke="#c9ccc6" />
    </g>
  )
}

function Bite({ x, y }) {
  return (
    <g fill="none">
      <path d={`M${x - 10} ${y - 5}q4 0 4 5t-4 5M${x + 12} ${y - 5}q-4 0 -4 5t4 5`} stroke="#78b87b" />
      {[[-3, -5], [3, -5], [-3, 5], [3, 5]].map(([dx, dy]) => (
        <g key={`${dx}${dy}`}>
          <circle cx={x + dx} cy={y + dy} r="2.500" stroke="#41639f" strokeWidth=".9" />
          <path d={`M${x + dx - 2} ${y + dy}h4M${x + dx} ${y + dy - 2}v4`} stroke="#7048b0" strokeWidth=".8" />
        </g>
      ))}
    </g>
  )
}

function PcbDrawing() {
  return (
    <Drawing viewBox="21 73 789 505" preserveAspectRatio="xMidYMid slice" role="img" aria-label="Board layout">
      <defs>
        <pattern id="dots" x="41" y="110" width="6.570" height="6.570" patternUnits="userSpaceOnUse">
          <rect width="1" height="1" fill="#939ba6" opacity=".42" />
        </pattern>
        <pattern id="bigDots" x="41" y="110" width="65.700" height="65.700" patternUnits="userSpaceOnUse">
          <rect width="1.300" height="1.300" fill="#a8b4be" opacity=".6" />
        </pattern>
        <pattern id="balls" width="3" height="3" patternUnits="userSpaceOnUse">
          <circle cx="1.500" cy="1.500" r="1.200" fill="#d8303f" />
        </pattern>
        <clipPath id="outline">
          <rect x="155" y="134" width="300" height="216" />
        </clipPath>
      </defs>
      <rect x="21" y="73" width="789" height="505" fill="url(#dots)" />
      <rect x="21" y="73" width="789" height="505" fill="url(#bigDots)" />
      <g fill="none" stroke="#6fb274" strokeWidth="1.200">
        <path d="M154.500 97.500h612v26h-612zM154.500 361.500h612v26h-612zM465.500 133.500h301v217.500h-301z" />
        <path d="M155 187.500H64.500v77H155M141.500 187.500v-54H457M141.500 264.500V351H457" />
        <path d="M90.500 187.500v-20h-30V284h29.500v-19.500M65 193.500h39.500v65.500H65zM66.500 205.500h14V247.500h-14z" />
        <path d="M64 183.500h18M73.500 175v18M64 268.500h18M73.500 260v18" />
        <path d="M159 84.500h-25.500V111M133.500 532v26.500H160M804 84.500h6M804 558.500h6" />
      </g>
      <Board />
      {BITES.map(([x, y]) => <Bite key={`${x}${y}`} x={x} y={y} />)}
      {[[461, 177], [461, 308]].map(([x, y]) => (
        <g key={y} transform={`rotate(90 ${x} ${y})`}><Bite x={x} y={y} /></g>
      ))}
      <g fill="none">
        <path d="M456 242.500H810M304.500 351V578" stroke="#7f8a93" />
        <path d="M465 294.500H810M465 304.500H810M615.500 295v9M357.500 351V578M367.500 351V578M357 553.500h10" stroke="#80507f" />
      </g>
      <g fill="#a3629c" fontFamily="Roboto, sans-serif" fontSize="11">
        <text x="486" y="303">1</text>
        <text x="745" y="303">2</text>
        <text x="359" y="426" fontSize="8">A</text>
      </g>
      <g fontFamily="Roboto, sans-serif" fontSize="13" fontWeight="400">
        {NOTES.map(([x, y, color, text]) => (
          <text key={`${x}-${y}`} x={x} y={y} fill={color} style={{ whiteSpace: 'pre' }}>{text}</text>
        ))}
      </g>
    </Drawing>
  )
}

function TopToolbars() {
  return (
    <>
      <Toolbar $height={22}>
        {TOP_GROUPS.map(([size, icons]) => (
          <React.Fragment key={icons[0]}>
            <Group $size={size}>{icons.map(i => <Tool key={i} icon={i} />)}</Group>
            <Divider />
          </React.Fragment>
        ))}
        <Tool icon="route" />
        <Select label="Action set" value="< Default >" width={65} after={2} />
        <Divider />
        <Tool icon="terminal" />
      </Toolbar>
      <Toolbar $height={21}>
        <Select label="Track width" value="Track: use netclass width" width={117} after={3} />
        <Tool icon="trackWidth" active />
        <Divider />
        <Select label="Via size" value="Via: use netclass sizes" width={112} after={1} />
        <Divider />
        <Select label="Active layer" value="F.Cu (PgUp)" width={97} after={2}>
          <LayerSwatch />
        </Select>
        <Tool icon="layerPair" />
        <Divider />
        <Select label="Grid" value="5.00 mils (0.1270 mm)" width={128} after={6} />
        <Select label="Zoom" value="Zoom 2.20" width={74} after={1} />
        <Divider />
        <Check label="Override locks" checked={false} />
      </Toolbar>
    </>
  )
}

function ToolColumn({ groups, width, more }) {
  return (
    <Column $width={width}>
      {groups.map(([size, icons], i) => (
        <React.Fragment key={icons[0]}>
          {i > 0 && icons[0] !== 'cursor' && <Divider $column />}
          <Group $column $size={size}>
            {icons.map(name => (
              <Tool key={name} icon={name} active={more === LEFT_MORE && ACTIVE.includes(name)} more={more.includes(name)} />
            ))}
          </Group>
        </React.Fragment>
      ))}
    </Column>
  )
}

function Appearance() {
  return (
    <Panel>
      <PanelTitle>Appearance</PanelTitle>
      <Tabs role="tablist">
        <Tab role="tab" aria-selected="true" $active $pad={7}>Layers</Tab>
        <Tab role="tab" aria-selected="false" $pad={11}>Objects</Tab>
        <Tab role="tab" aria-selected="false" $pad={7}>Nets</Tab>
      </Tabs>
      <LayerList>
        {LAYERS.map(([name, color], i) => (
          <LayerRow key={name} $active={i === 0}>
            <Marker $active={i === 0} />
            <Swatch $color={color} $checker={name.endsWith('Mask')} />
            <EyeButton type="button" aria-label={`Show ${name}`}>
              <svg width="9" height="9" viewBox="0 0 9 9">
                <ellipse cx="4.500" cy="4.500" rx="4.500" ry="4" fill="#4a4d50" />
                <path d="M1.200 4.500q3.300-4 6.600 0q-3.300 4-6.600 0z" fill="#e8e8e8" />
                <circle cx="4.500" cy="4.500" r="1.300" fill="#4a4d50" />
              </svg>
            </EyeButton>
            {name}
          </LayerRow>
        ))}
      </LayerList>
      <Options type="button"><Caret />Layer Display Options</Options>
      <Presets>
        <FieldLabel htmlFor="presets">Presets (Ctrl+Tab):</FieldLabel>
        <Select id="presets" value="---" />
        <FieldLabel htmlFor="viewports">Viewports (Shift+Tab):</FieldLabel>
        <Select id="viewports" value="---" />
      </Presets>
      <PanelTitle>Selection Filter</PanelTitle>
      <Filters>
        {FILTERS.map(([name, on]) => <Check key={name} label={name} checked={on} />)}
      </Filters>
    </Panel>
  )
}

function App() {
  return (
    <Window>
      <GlobalStyle />
      <TitleBar>
        <svg width="12" height="12" viewBox="0 0 16 16">
          <rect width="16" height="16" rx="1" fill="#136a1f" />
          <path d="M2 6h5v4h6M8 1v4M3 13h5" stroke="#3fa744" fill="none" />
          <circle cx="3" cy="3" r="1.500" fill="#d9c541" /><circle cx="13" cy="5" r="1.300" fill="#d9c541" />
        </svg>
        <Title>Ems4_0 [Unsaved] — PCB Editor</Title>
        {[
          ['Shade', 'M1 5l2.500-3L6 5'],
          ['Minimize', 'M1 6h5'],
          ['Maximize', 'M1 1h5v5H1z'],
          ['Close', 'M1 1l5 5M6 1L1 6'],
        ].map(([name, d]) => (
          <WindowButton key={name} type="button" aria-label={name}>
            <svg width="6" height="6" viewBox="0 0 7 7"><path d={d} fill="none" stroke="#2d2f31" strokeWidth="1.500" /></svg>
          </WindowButton>
        ))}
      </TitleBar>
      <MenuBar>
        {['File', 'Edit', 'View', 'Place', 'Route', 'Inspect', 'Tools', 'Preferences', 'Help'].map(name => (
          <MenuLink key={name} href="#">{name}</MenuLink>
        ))}
      </MenuBar>
      <TopToolbars />
      <Main>
        <ToolColumn groups={LEFT_GROUPS} width={21} more={LEFT_MORE} />
        <Canvas><PcbDrawing /></Canvas>
        <ToolColumn groups={RIGHT_GROUPS} width={19} more={RIGHT_MORE} />
        <Appearance />
      </Main>
      <MessagePanel>
        {MESSAGES.map(([name, value]) => (
          <Message key={name}><dt>{name}</dt><dd>{value}</dd></Message>
        ))}
      </MessagePanel>
      <StatusBar>
        <Status $width={44}>Z 2.66</Status>
        <Status $width={109}>X -2280.00  Y -1390.00</Status>
        <Status $width={179}>dx -2280.00  dy -1390.00  dist 2670.30</Status>
        <Status $width={117}>grid 5.00</Status>
        <Status $width={40}>mils</Status>
        <Alerts width="20" height="13" viewBox="0 0 20 13">
          <path d="M0 11l4-8 4 8z" fill="#e9b53c" />
          <rect x="5" y="2" width="6" height="10" rx="2" fill="#cc1f26" />
          <text x="8" y="10" fontSize="7" fontWeight="700" textAnchor="middle" fill="#fff">2</text>
          <path d="M12 13L20 5M15 13l5-5M18 13l2-2" stroke="#aaa" />
        </Alerts>
      </StatusBar>
    </Window>
  )
}

export default App
